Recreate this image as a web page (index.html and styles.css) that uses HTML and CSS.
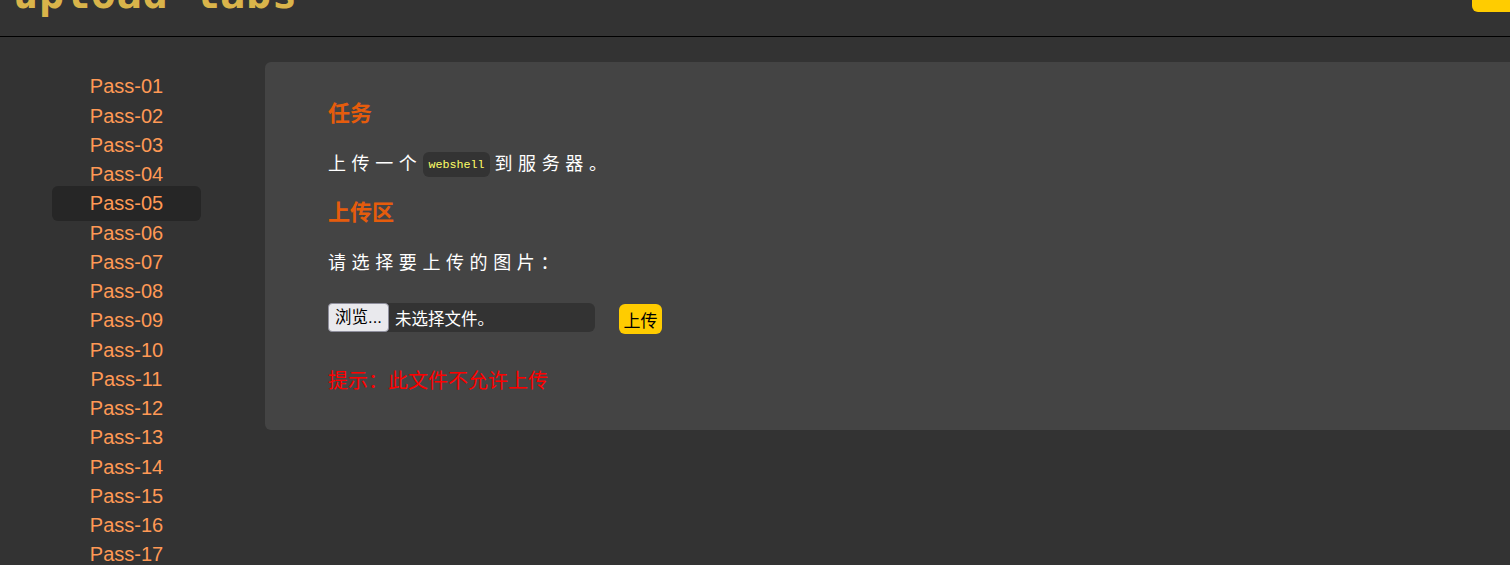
FILE: index.html
```html
<!DOCTYPE html>
<html lang="zh-CN">
<head>
    <meta charset="UTF-8">
    <title>upload-labs</title>
    <link rel="stylesheet" href="styles.css">
</head>
<body>
    <div class="header">
        <div class="logo">upload-labs</div>
        <a class="top-btn" href="#"></a>
    </div>
    <div class="main">
        <ul class="menu">
            <li><a href="#">Pass-01</a></li>
            <li><a href="#">Pass-02</a></li>
            <li><a href="#">Pass-03</a></li>
            <li><a href="#">Pass-04</a></li>
            <li class="current"><a href="#">Pass-05</a></li>
            <li><a href="#">Pass-06</a></li>
            <li><a href="#">Pass-07</a></li>
            <li><a href="#">Pass-08</a></li>
            <li><a href="#">Pass-09</a></li>
            <li><a href="#">Pass-10</a></li>
            <li><a href="#">Pass-11</a></li>
            <li><a href="#">Pass-12</a></li>
            <li><a href="#">Pass-13</a></li>
            <li><a href="#">Pass-14</a></li>
            <li><a href="#">Pass-15</a></li>
            <li><a href="#">Pass-16</a></li>
            <li><a href="#">Pass-17</a></li>
        </ul>
        <div class="panel">
            <h3>任务</h3>
            <p>上传一个<code>webshell</code>到服务器。</p>
            <h3>上传区</h3>
            <p>请选择要上传的图片：</p>
            <form class="upload-form">
                <div class="file-box">
                    <span class="file-btn">浏览...</span>
                    <span class="file-name">未选择文件。</span>
                </div>
                <button class="upload-btn" type="button">上传</button>
            </form>
            <div class="msg">提示：此文件不允许上传</div>
        </div>
    </div>
</body>
</html>
```

FILE: styles.css
```css
html, body {
    height: 100%;
    overflow: hidden;
}

body {
    margin: 0;
    background: #333;
    font-family: "Liberation Sans", "Noto Sans CJK SC", sans-serif;
}

.header {
    height: 36px;
    border-bottom: 1px solid #000;
    display: flex;
    justify-content: space-between;
    overflow: hidden;
}

/* logo is cropped by the top of the window */
.logo {
    margin: -31px 0 0 13px;
    color: #d9b44a;
    font-family: "DejaVu Sans Mono", monospace;
    font-size: 42px;
    font-weight: bold;
    line-height: 50px;
    letter-spacing: 0.6px;
    height: 60px;
}

.top-btn {
    display: block;
    width: 38px;
    height: 12px;
    background: #fc0;
    border-radius: 0 0 0 6px;
}

.main {
    display: flex;
    align-items: flex-start;
    padding-top: 25px;
}

.menu {
    list-style: none;
    margin: 10.4px 0 0 52px;
    padding: 0;
    width: 149px;
    flex-shrink: 0;
}

.menu li {
    height: 29.25px;
    text-align: center;
    font-size: 20px;
    line-height: 29px;
}

.menu a {
    color: #ff9955;
    text-decoration: none;
}

.menu .current {
    background: #262626;
    border-radius: 6px;
    height: 35px;
    line-height: 34px;
    margin: -3px 0 -2.75px;
}

.panel {
    flex: 1;
    margin-left: 64px;
    height: 368px;
    box-sizing: border-box;
    padding: 37px 0 0 63px;
    background: #444;
    border-radius: 6px 0 0 6px;
    color: #fff;
}

.panel h3 {
    margin: 0;
    font-size: 22px;
    line-height: 30px;
    color: #e65c0c;
}

.panel p {
    margin: 0;
    font-size: 18px;
    line-height: 34px;
    letter-spacing: 5.6px;
    height: 69px;
    padding-top: 18px;
    box-sizing: border-box;
}

.panel code {
    display: inline-block;
    margin: 0 5px 0 1px;
    padding: 0 5px;
    height: 25px;
    line-height: 26px;
    vertical-align: 2px;
    background: #333;
    border-radius: 6px;
    color: #ff6;
    font-family: "Liberation Mono", monospace;
    font-size: 11.7px;
    letter-spacing: 0;
}

.upload-form {
    display: flex;
    align-items: flex-start;
    margin-top: 6px;
}

.file-box {
    display: flex;
    align-items: center;
    width: 267px;
    height: 29px;
    background: #333;
    border-radius: 6px;
    font-size: 16.5px;
}

.file-btn {
    box-sizing: border-box;
    width: 61px;
    height: 29px;
    line-height: 26px;
    text-align: center;
    background: #e9e9ed;
    border: 1px solid #8f8f9d;
    border-radius: 4px;
    color: #000;
}

.file-name {
    margin-left: 6px;
}

.upload-btn {
    margin: 1px 0 0 24px;
    width: 43px;
    height: 30px;
    padding: 0;
    border: none;
    border-radius: 6px;
    background: #fc0;
    color: #000;
    font-family: inherit;
    font-size: 17px;
}

.msg {
    margin-top: 32px;
    color: #f00;
    font-family: "Liberation Serif", "Noto Sans CJK SC", serif;
    font-size: 20px;
    line-height: 30px;
}
```
